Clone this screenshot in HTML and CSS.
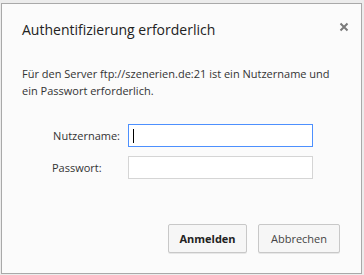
FILE: index.html
```html
<!DOCTYPE html>
<html lang="de">
<head>
    <meta charset="UTF-8">
    <title>Authentifizierung erforderlich</title>
    <link rel="stylesheet" href="styles.css">
</head>
<body>
    <div class="auth-dialog">
        <div class="dialog-header">
            <h1 class="dialog-title">Authentifizierung erforderlich</h1>
            <button class="close-button" aria-label="Schließen">
                <svg width="10" height="10" viewBox="0 0 10 10">
                    <path d="M1.5 1.5 L8.5 8.5 M8.5 1.5 L1.5 8.5" stroke="#7a7a7a" stroke-width="2"/>
                </svg>
            </button>
        </div>

        <p class="dialog-message">Für den Server ftp://szenerien.de:21 ist ein Nutzername und ein Passwort erforderlich.</p>

        <form class="auth-form">
            <div class="form-row">
                <label for="username">Nutzername:</label>
                <div class="field focused" id="username"><span class="caret"></span></div>
            </div>
            <div class="form-row">
                <label for="password">Passwort:</label>
                <div class="field" id="password"></div>
            </div>
        </form>

        <div class="dialog-buttons">
            <button class="dialog-button primary">Anmelden</button>
            <button class="dialog-button">Abbrechen</button>
        </div>
    </div>
</body>
</html>
```

FILE: styles.css
```css
* {
    margin: 0;
    padding: 0;
    box-sizing: border-box;
}

body {
    font-family: 'Segoe UI', 'Open Sans', 'Noto Sans', sans-serif;
    background: #ececec;
    width: 364px;
    height: 275px;
    overflow: hidden;
}

.auth-dialog {
    margin: 3px 2px 0 1px;
    height: 271px;
    background: #fbfbfb;
    border: 1px solid #a9a9a9;
    display: flex;
    flex-direction: column;
}

.dialog-header {
    display: flex;
    justify-content: space-between;
    align-items: flex-start;
    padding: 16px 11px 0 20px;
}

.dialog-title {
    font-size: 14px;
    font-weight: normal;
    color: #222;
    line-height: 20px;
}

.close-button {
    border: none;
    background: none;
    width: 12px;
    height: 12px;
    margin-top: 1px;
    display: flex;
    align-items: center;
    justify-content: center;
}

.dialog-message {
    font-size: 11px;
    color: #333;
    line-height: 17px;
    padding: 25px 20px 0 20px;
}

.auth-form {
    display: flex;
    flex-direction: column;
    gap: 9px;
    padding: 25px 0 0 0;
}

.form-row {
    display: flex;
    align-items: center;
    justify-content: flex-start;
}

.form-row label {
    width: 118px;
    text-align: right;
    font-size: 11px;
    color: #333;
    padding-bottom: 1px;
}

.form-row label[for="password"] {
    text-align: left;
    padding-left: 50px;
}

.field {
    margin-left: 8px;
    width: 185px;
    height: 23px;
    background: #fff;
    border: 1px solid #d5d5d5;
    display: flex;
    align-items: center;
    padding-left: 4px;
}

.field.focused {
    border-color: #4d90fe;
}

.caret {
    width: 1px;
    height: 14px;
    background: #000;
}

.dialog-buttons {
    margin-top: auto;
    display: flex;
    justify-content: flex-end;
    gap: 11px;
    padding: 0 21px 20px 0;
}

.dialog-button {
    font-family: inherit;
    font-size: 11px;
    color: #444;
    height: 29px;
    width: 82px;
    background: #f6f6f6;
    border: 1px solid #c8c8c8;
    border-radius: 2px;
    box-shadow: 0 1px 0 rgba(0,0,0,0.08);
}

.dialog-button.primary {
    width: 79px;
    font-weight: bold;
    color: #222;
}
```
